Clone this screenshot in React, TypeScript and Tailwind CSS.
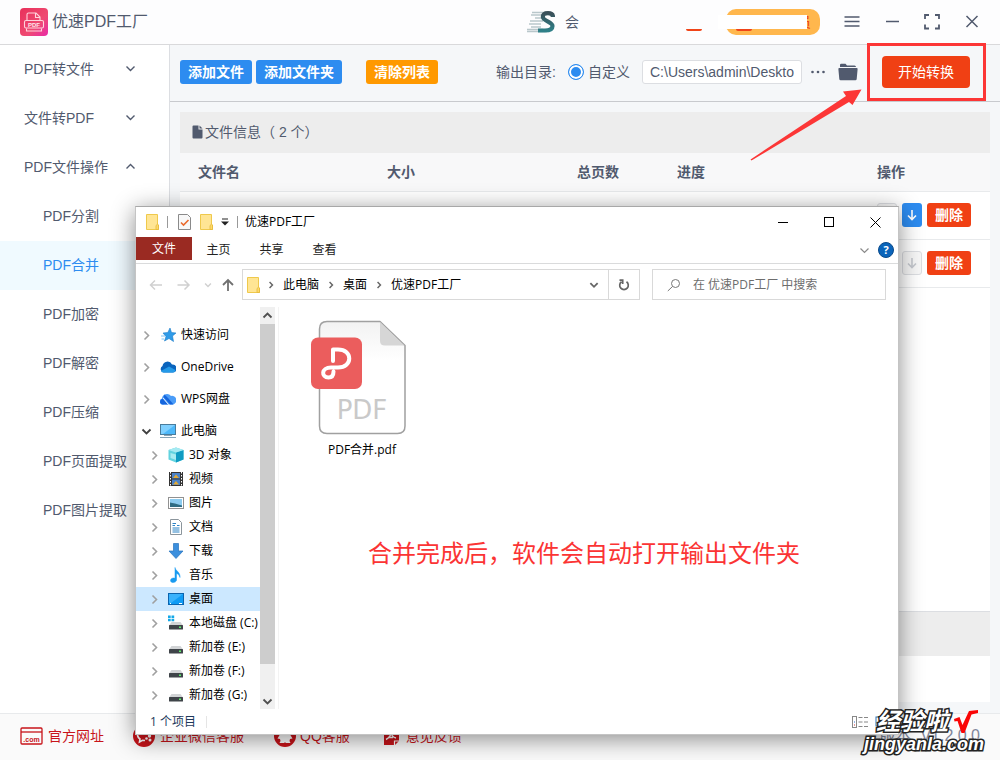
import React from 'react';

const uiFont = "font-['Liberation_Sans','Noto_Sans_CJK_SC',sans-serif]";
const winFont = "font-['Open_Sans','Noto_Sans_CJK_SC',sans-serif]";

function Chevron({ dir = 'right', className = '' }: { dir?: 'right' | 'down' | 'up'; className?: string }) {
  const paths = { right: 'M3.5 1.5 L7.5 5.5 L3.5 9.5', down: 'M1.5 3.5 L5.5 7.5 L9.5 3.5', up: 'M1.5 7.5 L5.5 3.5 L9.5 7.5' };
  return (
    <svg viewBox="0 0 11 11" fill="none" stroke="currentColor" className={`shrink-0 ${className}`}>
      <path d={paths[dir]} />
    </svg>
  );
}

function FolderIcon() {
  return (
    <svg viewBox="0 0 13 16" className="h-4 w-[13px] shrink-0">
      <path d="M0.5 0.5H11.5V10.5L12.5 11V15.5H0.5Z" fill="#ffe594" stroke="#efc94c" />
      <path d="M10 15.5V11.5L11.5 10.2L12.5 11V15.5Z" fill="#ffd968" stroke="#e3b93c" strokeWidth=".8" />
    </svg>
  );
}

function AppLogo() {
  return (
    <svg viewBox="0 0 28 28" className="h-7 w-7">
      <defs>
        <linearGradient id="logoBg" x1="0" y1="0" x2="1" y2="1">
          <stop offset="0" stopColor="#e8305a" />
          <stop offset=".6" stopColor="#ef4a72" />
          <stop offset="1" stopColor="#e82aa8" />
        </linearGradient>
      </defs>
      <rect width="28" height="28" rx="4" fill="url(#logoBg)" />
      <g fill="none" stroke="#ffd3dc" strokeWidth="1.1">
        <path d="M7 12V6.5Q7 5 8.500 5H16L20 9V12" />
        <path d="M15.500 5V9.500H20" />
        <rect x="4.500" y="12.500" width="19" height="7.500" rx="1.500" />
        <path d="M6.500 20.500V23H21.500V20.500" />
      </g>
      <text x="14" y="18.500" textAnchor="middle" fontSize="6" fontWeight="700" fill="#ffe6ec">PDF</text>
    </svg>
  );
}

function BrandS() {
  return (
    <svg viewBox="0 0 28 22" className="h-[22px] w-7">
      <defs>
        <linearGradient id="sFill" x1="0" y1="0" x2="0" y2="1">
          <stop offset="0" stopColor="#3a5059" />
          <stop offset="1" stopColor="#2f8088" />
        </linearGradient>
      </defs>
      <path d="M5 1.500H20M4 4H15M8 7H15M3 10H16M2 13H14M4 16H14M0 18.500H16M0 20.500H20" stroke="#b9c7cb" strokeWidth="1.300" fill="none" />
      <path d="M26 6C26 3 24 2.200 21 2.200C17.500 2.200 15.500 3.500 16 6.500C16.500 10 25.500 11 25.500 15C25.500 18.500 22 19.500 18 19.500H11" fill="none" stroke="url(#sFill)" strokeWidth="4.200" />
    </svg>
  );
}

const menuGroups = [
  { label: 'PDF转文件', open: false },
  { label: '文件转PDF', open: false },
  { label: 'PDF文件操作', open: true },
];
const subItems = ['PDF分割', 'PDF合并', 'PDF加密', 'PDF解密', 'PDF压缩', 'PDF页面提取', 'PDF图片提取'];

function Header() {
  return (
    <header className="flex h-[45px] shrink-0 items-center border-b border-[#d9d9db] bg-[#fdfdfe] px-5">
      <AppLogo />
      <h1 className="ml-1 text-[16px] leading-6">优速PDF工厂</h1>
      <div className="ml-auto flex items-center gap-6">
        <div className="relative flex w-[175px] items-center gap-[10px]">
          <BrandS />
          <span className="text-[14px] leading-5">会</span>
          <span className="absolute right-0 bottom-[2px] h-[2px] w-4 rounded-b-full bg-[#f04418]" />
        </div>
        <button className="relative flex h-[26px] w-[94px] items-center justify-end rounded-[10px] bg-[#ffb74d] pr-[9px] text-[14px] text-[#f04418]">
          员
          <span className="absolute top-[6px] -left-2 h-[14px] w-[89px] bg-white" />
          <span className="absolute top-5 left-[10px] h-[2px] w-4 rounded-b-full bg-[#f04418]" />
        </button>
        <button aria-label="menu">
          <svg viewBox="0 0 16 16" className="h-4 w-4"><path d="M.5 3H15.500M.5 7.500H15.500M.5 12H15.500" stroke="#515a6e" strokeWidth="1.500" /></svg>
        </button>
        <button aria-label="minimize">
          <svg viewBox="0 0 16 16" className="h-4 w-4"><path d="M2 7.500H15" stroke="#515a6e" strokeWidth="1.500" /></svg>
        </button>
        <button aria-label="fullscreen">
          <svg viewBox="0 0 16 16" className="h-4 w-4"><path d="M1 5V1H5M11 1H15V5M15 10.500V14.500H11M5 14.500H1V10.500" fill="none" stroke="#515a6e" strokeWidth="1.800" /></svg>
        </button>
        <button aria-label="close">
          <svg viewBox="0 0 16 16" className="h-4 w-4"><path d="M2.500 2L13.500 13M13.500 2L2.500 13" stroke="#515a6e" strokeWidth="1.500" /></svg>
        </button>
      </div>
    </header>
  );
}

function Sidebar() {
  return (
    <nav className="w-[170px] shrink-0 border-r border-[#dcdee2] bg-white text-[14px] leading-5">
      {menuGroups.map((g) => (
        <button key={g.label} className="flex h-[49px] w-full items-center justify-between pr-[33px] pb-[2px] pl-6">
          {g.label}
          <Chevron dir={g.open ? 'up' : 'down'} className="h-[11px] w-[11px] stroke-[1.4px]" />
        </button>
      ))}
      {subItems.map((s) => (
        <a key={s} href="#" className={`flex h-[49px] items-center pb-[2px] pl-[43px] ${s === 'PDF合并' ? 'bg-[#f0faff] text-[#2d8cf0]' : ''}`}>
          {s}
        </a>
      ))}
    </nav>
  );
}

function Toolbar() {
  return (
    <div className="flex h-[57px] shrink-0 items-center border-b border-[#c8cace] pr-[30px] pb-[2px] pl-[10px] text-[14px] leading-5">
      <button className="h-6 w-[72px] rounded-[3px] bg-[#2d8cf0] font-bold text-white">添加文件</button>
      <button className="ml-1 h-6 w-[86px] rounded-[3px] bg-[#2d8cf0] font-bold text-white">添加文件夹</button>
      <button className="ml-6 h-6 w-[72px] rounded-[3px] bg-[#ff9900] font-bold text-white">清除列表</button>
      <div className="ml-auto flex items-center">
        <span>输出目录:</span>
        <label className="ml-3 flex items-center gap-1">
          <input type="radio" name="out" defaultChecked className="h-4 w-4 appearance-none rounded-full border border-[#2d8cf0] bg-[#2d8cf0] [box-shadow:inset_0_0_0_2px_white]" />
          自定义
        </label>
        <input aria-label="输出目录" defaultValue="C:\Users\admin\Deskto" className="ml-3 h-6 w-40 rounded-[3px] border border-[#dcdee2] bg-white px-[7px] text-[14px]" />
        <button aria-label="more" className="ml-2">
          <svg viewBox="0 0 16 16" className="h-4 w-4" fill="#515a6e"><circle cx="2.500" cy="8" r="1.300" /><circle cx="8" cy="8" r="1.300" /><circle cx="13.500" cy="8" r="1.300" /></svg>
        </button>
        <button aria-label="open folder" className="ml-3">
          <svg viewBox="0 0 20 18" className="h-[18px] w-5" fill="#515a6e">
            <path d="M2 4V2Q2 .8 3.200 .8H7.500L9 2.500H16.500Q18 2.500 18 4Z" />
            <path d="M1.300 5H18.700Q19.800 5 19.600 6.200L18.700 16Q18.600 17.200 17.400 17.200H2.600Q1.400 17.200 1.300 16L.4 6.200Q.2 5 1.300 5Z" />
          </svg>
        </button>
        <div className="relative ml-6">
          <button className="h-8 w-[88px] rounded-[4px] bg-[#f04014] text-white">开始转换</button>
          <span className="pointer-events-none absolute -top-[13px] -left-[15px] h-[58px] w-[119px] border-[3px] border-[#fc3636]" />
          <svg viewBox="0 0 112 72" className="pointer-events-none absolute top-[33px] -left-[132px] h-[72px] w-28">
            <path d="M.5 70.500L96 7L93 2.500L111.500 .5L102.500 16L99 13L1.500 71.500Z" fill="#fc3636" />
          </svg>
        </div>
      </div>
    </div>
  );
}

function RowActions({ canMoveDown }: { canMoveDown: boolean }) {
  const disabled = 'border border-[#dcdee2] bg-[#f7f7f7] text-[#c5c8ce]';
  return (
    <div className="flex gap-[5px]">
      <button aria-label="up" className={`flex h-6 w-5 items-center justify-center rounded-[3px] ${disabled}`}>
        <svg viewBox="0 0 12 12" className="h-3 w-3 shrink-0" fill="none" stroke="currentColor" strokeWidth="1.600"><path d="M6 11V1.500M2 5.500L6 1.500L10 5.500" /></svg>
      </button>
      <button aria-label="down" className={`flex h-6 w-5 items-center justify-center rounded-[3px] ${canMoveDown ? 'bg-[#2d8cf0] text-white' : disabled}`}>
        <svg viewBox="0 0 12 12" className="h-3 w-3 shrink-0" fill="none" stroke="currentColor" strokeWidth="1.600"><path d="M6 1V10.500M2 6.500L6 10.500L10 6.500" /></svg>
      </button>
      <button className="h-6 w-11 rounded-[3px] bg-[#f04014] font-bold text-white">删除</button>
    </div>
  );
}

function FilePanel() {
  return (
    <section className="mx-[10px] mt-[10px] mb-[11px] flex flex-1 flex-col bg-white text-[14px] leading-5">
      <div className="flex h-[41px] items-center bg-[#ededed] pb-[2px] pl-3">
        <svg viewBox="0 0 11 14" className="h-[14px] w-[11px]">
          <path d="M1.500 .5H6.500V4.500H10.500V12.500Q10.500 13.500 9.500 13.500H1.500Q.5 13.500 .5 12.500V1.500Q.5 .5 1.500 .5Z" fill="#515a6e" />
          <path d="M7.500 .5L10.500 3.500H7.500Z" fill="#515a6e" />
        </svg>
        <span className="ml-[2px]">文件信息（ 2 个）</span>
      </div>
      <table className="w-full table-fixed border-collapse text-left">
        <colgroup>
          <col className="w-[189px]" />
          <col className="w-[190px]" />
          <col className="w-[100px]" />
          <col className="w-[200px]" />
          <col />
        </colgroup>
        <thead>
          <tr className="h-[38px] border-b border-[#e8eaec] bg-[#f8f8f9]">
            {['文件名', '大小', '总页数', '进度', '操作'].map((h) => (
              <th key={h} className="pl-[18px] font-bold">{h}</th>
            ))}
          </tr>
        </thead>
        <tbody>
          {[true, false].map((down, i) => (
            <tr key={i} className="h-12 border-b border-[#e8eaec]">
              <td /><td /><td /><td />
              <td className="pl-[18px]"><RowActions canMoveDown={down} /></td>
            </tr>
          ))}
        </tbody>
      </table>
      <div className="mt-auto mb-[46px] h-[45px] border-t border-[#dcdee2] bg-[#ededed]" />
    </section>
  );
}

function Footer() {
  const items = [
    {
      label: '官方网址',
      icon: (
        <svg viewBox="0 0 24 24" className="h-6 w-6">
          <rect x="1" y="4" width="21" height="16" rx="1" fill="none" stroke="#c8141a" strokeWidth="1.300" />
          <path d="M1 8H22" stroke="#c8141a" strokeWidth="1.300" />
          <text x="11.500" y="17.500" textAnchor="middle" fontSize="7" fontWeight="700" fill="#c8141a">.com</text>
        </svg>
      ),
    },
    {
      label: '企业微信客服',
      icon: (
        <svg viewBox="0 0 24 24" className="h-6 w-6">
          <circle cx="12" cy="12" r="11" fill="#c8141a" />
          <path d="M5.500 9Q6 5.500 11 5.500Q16.500 5.500 17 9M5.500 9Q5 13 8 15L7.500 18L10.500 16.300L13 16.500" fill="none" stroke="#fff" strokeWidth="1.600" />
          <circle cx="17.500" cy="12" r="1.700" fill="#fff" /><circle cx="14.500" cy="14.500" r="1.300" fill="#fff" /><circle cx="18" cy="16" r="1.500" fill="#fff" />
        </svg>
      ),
    },
    {
      label: 'QQ客服',
      icon: (
        <svg viewBox="0 0 24 24" className="h-6 w-6">
          <circle cx="13" cy="12" r="11" fill="#c8141a" />
          <path d="M13 4.500C9 4.500 8 7 8.200 10L5.500 14.500L8 15L8.500 17L7.500 19H12L13 18.300L14 19H18.500L17.500 17L18 15L20.500 14.500L17.800 10C18 7 17 4.500 13 4.500Z" fill="#fff" />
        </svg>
      ),
    },
    {
      label: '意见反馈',
      icon: (
        <svg viewBox="0 0 24 24" className="h-6 w-6">
          <path d="M6 4H18V8H21V17L17 21H6Z" fill="#c8141a" />
          <path d="M16.500 21V17H21" fill="none" stroke="#fff" strokeWidth="1.200" />
          <path d="M8 15.500Q13 13 13 8Q13.500 13 18 14M10 13.500H15" fill="none" stroke="#fff" strokeWidth="1.400" />
        </svg>
      ),
    },
  ];
  return (
    <footer className="flex h-[47px] shrink-0 items-center gap-7 border-t border-[#e8eaec] bg-[#fafafa] px-5 pb-[2px] text-[14px] leading-5 text-[#c8141a]">
      {items.map((it) => (
        <a key={it.label} href="#" className="flex items-center gap-1">{it.icon}{it.label}</a>
      ))}
      <span className="ml-auto text-[16px] text-[#80869c]">版本&nbsp; V1.2.0.0</span>
    </footer>
  );
}

const diskArt = (
  <>
    <path d="M3.500 7H12.500L15 10.500H1Z" fill="#d2d4d6" />
    <rect x="1" y="10" width="14" height="4.500" rx=".5" fill="#3f4449" />
    <rect x="11" y="11.500" width="2" height="1.500" fill="#5df06b" />
  </>
);

function TreeIcon({ kind }: { kind: string }) {
  const art: Record<string, React.ReactNode> = {
    star: <><path d="M10 1L11.500 5.500L16 6L12.500 9L13.500 14.500L9 11.500L4.500 14L6 9.500L3 6L7.800 5.500Z" fill="#2f9be8" stroke="#1c7cc7" strokeWidth=".6" /><path d="M1 9H5M1.500 12H4" stroke="#7fc4f5" /></>,
    cloud: <><path d="M3.500 13.500A3.500 3.500 0 0 1 2.500 7A5 5 0 0 1 12 5.500A4 4 0 0 1 13 13.500Z" fill="#0a64bd" /><path d="M1 12L9 7.500L15.500 11Q15 13.500 13 13.500H3.500Q1.500 13.500 1 12Z" fill="#259ae8" /></>,
    wps: <><path d="M4 13.500A3 3 0 0 1 2 7.500A5 5 0 0 1 11 5A4.200 4.200 0 0 1 13 13.500Z" fill="#4a9cf8" /><path d="M0 10.500Q.5 8 3 7.500L8 13.500H3Q0 13.500 0 10.500Z" fill="#1565dd" /><path d="M4.500 3.500L8.500 7.500L13.500 13.500H10L3.500 6Z" fill="#1565dd" /><path d="M3 7L8.500 13.500" stroke="#fff" strokeWidth=".9" /></>,
    pc: <><rect x=".5" y="1.500" width="15" height="10" fill="#4db8fa" stroke="#4a7c9c" /><path d="M1 2H15L3 11H1Z" fill="#80d0ff" /><path d="M4 12.500H12M0 14.500H16" stroke="#88a5b8" /></>,
    cube: <><path d="M8 .5L15.500 3V12.500L8 15.500L.5 12.500V3Z" fill="#62d3df" /><path d="M8 5.500L15.500 3V12.500L8 15.500Z" fill="#0f9bc2" /><path d="M.5 3L8 .5L15.500 3L8 5.500Z" fill="#a5eaf2" /><path d="M2.500 6L8 7.500V13L2.500 11Z" fill="#a8ecf1" /></>,
    film: <><rect x="1" y="1" width="14" height="14" fill="#333" /><path d="M2.500 1V15M13.500 1V15" stroke="#fff" strokeDasharray="1.500 1.500" /><rect x="4" y="2" width="8" height="5.500" fill="#4b82c8" /><rect x="4" y="8.500" width="8" height="5.500" fill="#4b82c8" /><path d="M5 7L8 3.500L11 7M5 13.500L8 10L11 13.500" fill="#e4aa33" /></>,
    image: <><rect x=".5" y="2.500" width="15" height="11" fill="#fff" stroke="#919191" /><rect x="2" y="4" width="12" height="8" fill="#8ccbef" /><path d="M2 7.500Q6 8 14 10.500V12H2Z" fill="#2f6c83" /></>,
    doc: <><path d="M2.500 .5H10.500L13.500 3.500V15.500H2.500Z" fill="#fff" stroke="#8b959c" /><path d="M4.500 4.500H8M9 6.500H11.500M4.500 6.500H7M4.500 9H11.500M4.500 11H11.500M4.500 13H11.500" stroke="#2b83c6" /></>,
    down: <path d="M5.500 .5H10.500V8H15L8 15.500L1 8H5.500Z" fill="#3c8fdd" stroke="#2773bd" strokeWidth=".7" />,
    music: <path d="M7 .5C7.500 4 12.500 5 12 10.500C11.500 8 10 7 8.500 6.500V13C8.500 16 2.500 16.500 2.500 13.500C2.500 11.500 5 10.500 7 11.300Z" fill="#179af0" stroke="#179af0" strokeWidth=".5" />,
    desktop: <><rect x=".5" y="2.500" width="15" height="11" fill="#0f9bf5" stroke="#0c64ae" /><path d="M1 3H15L3 12H1Z" fill="#39b2fc" /><path d="M2 12.500H3M11 12.500H14" stroke="#fff" /></>,
    system: <>{diskArt}<path d="M0 .5H2.700V3H0ZM3.500 .5H6.200V3H3.500ZM0 3.800H2.700V6.300H0ZM3.500 3.800H6.200V6.300H3.500Z" fill="#13a8e8" /></>,
    disk: diskArt,
  };
  return <svg viewBox="0 0 16 16" className="h-4 w-4 shrink-0">{art[kind]}</svg>;
}

const topNodes = [['star', '快速访问'], ['cloud', 'OneDrive'], ['wps', 'WPS网盘']];
const pcNodes = [
  ['cube', '3D 对象'], ['film', '视频'], ['image', '图片'], ['doc', '文档'], ['down', '下载'], ['music', '音乐'],
  ['desktop', '桌面'], ['system', '本地磁盘 (C:)'], ['disk', '新加卷 (E:)'], ['disk', '新加卷 (F:)'], ['disk', '新加卷 (G:)'],
];

function Tree() {
  return (
    <ul className="w-[124px] shrink-0 overflow-hidden pt-3 pb-[2px] whitespace-nowrap">
      {topNodes.map(([k, t]) => (
        <li key={t} className="flex h-8 items-center pl-[5px]">
          <Chevron className="h-[11px] w-[11px] stroke-[1.6px] text-[#a0a0a0]" />
          <span className="ml-2 flex items-center gap-[5px]"><TreeIcon kind={k} />{t}</span>
        </li>
      ))}
      <li className="mt-1 flex h-6 items-center pl-[5px]">
        <Chevron dir="down" className="h-[11px] w-[11px] stroke-[1.8px] text-[#404040]" />
        <span className="ml-2 flex items-center gap-[5px]"><TreeIcon kind="pc" />此电脑</span>
      </li>
      {pcNodes.map(([k, t]) => (
        <li key={t} className={`flex h-6 items-center pl-[13px] ${t === '桌面' ? 'bg-[#cce8ff]' : ''}`}>
          <Chevron className="h-[11px] w-[11px] stroke-[1.6px] text-[#a0a0a0]" />
          <span className="ml-2 flex items-center gap-[5px]"><TreeIcon kind={k} />{t}</span>
        </li>
      ))}
    </ul>
  );
}

function PdfFile() {
  return (
    <figure className="flex w-[110px] flex-col items-center">
      <svg viewBox="0 0 104 120" className="h-[120px] w-[104px]">
        <defs>
          <linearGradient id="paper" x1="0" y1="0" x2="0" y2="1">
            <stop offset="0" stopColor="#f2f2f2" />
            <stop offset=".35" stopColor="#ffffff" />
          </linearGradient>
        </defs>
        <path d="M17 4.500H70L95 28.500V109Q95 116.500 87.500 116.500H17Q9.500 116.500 9.500 109V12Q9.500 4.500 17 4.500Z" fill="url(#paper)" stroke="#a0a0a0" strokeWidth="1.500" strokeLinejoin="round" />
        <path d="M70 5L94.500 28.500H75Q70 28.500 70 24Z" fill="#d6d6d6" />
        <rect x="1" y="20.500" width="51" height="51.500" rx="7" fill="#eb5d5d" />
        <path d="M23 44V32.500H28C43 32.500 43 50.500 28 50.500H21C11 50.500 11 60.500 18.500 60.500C22.500 60.500 23.500 58 23.500 54.500" fill="none" stroke="#fff" strokeWidth="4" strokeLinecap="round" strokeLinejoin="round" />
        <text x="52" y="102" textAnchor="middle" fontSize="26" fill="#c9c9c9" style={{ fontFamily: '"DejaVu Sans", sans-serif' }}>PDF</text>
      </svg>
      <figcaption className="mt-[5px]">PDF合并.pdf</figcaption>
    </figure>
  );
}

function ExplorerWindow() {
  return (
    <div className={`absolute top-[206px] right-[101px] left-[135px] flex flex-col border border-[#c4c4c4] border-t-[#a8a8a8] bg-white text-[12px] leading-4 text-black shadow-[0_4px_22px_rgba(0,0,0,0.45)] ${winFont}`}>
      <div className="flex h-[30px] items-center pl-[10px]">
        <FolderIcon />
        <span className="ml-2 h-3 w-px bg-[#999]" />
        <svg viewBox="0 0 13 16" className="ml-[10px] h-4 w-[13px]">
          <path d="M.5 .5H9.500L12.500 3.500V15.500H.5Z" fill="#f8f8f8" stroke="#8a8a8a" />
          <path d="M3 8.500L5.500 11L10.500 6" fill="none" stroke="#ea6a2c" strokeWidth="1.600" />
        </svg>
        <span className="ml-[9px] flex"><FolderIcon /></span>
        <svg viewBox="0 0 8 8" className="ml-2 h-2 w-2"><path d="M1 1H7" stroke="#222" /><path d="M0 3.500H8L4 7.500Z" fill="#222" /></svg>
        <span className="ml-2 h-3 w-px bg-[#999]" />
        <span className="ml-[7px]">优速PDF工厂</span>
        <div className="ml-auto flex">
          <button aria-label="minimize" className="flex h-[29px] w-[46px] items-center justify-center"><svg viewBox="0 0 11 11" className="h-[11px] w-[11px]"><path d="M0 5.500H10" stroke="#000" /></svg></button>
          <button aria-label="maximize" className="flex h-[29px] w-[46px] items-center justify-center"><svg viewBox="0 0 11 11" className="h-[11px] w-[11px]"><rect x=".5" y=".5" width="9" height="9" fill="none" stroke="#000" /></svg></button>
          <button aria-label="close" className="flex h-[29px] w-[46px] items-center justify-center"><svg viewBox="0 0 11 11" className="h-[11px] w-[11px]"><path d="M.5 .5L10.500 10.500M10.500 .5L.5 10.500" stroke="#000" /></svg></button>
        </div>
      </div>
      <div className="flex h-[27px] items-start border-b border-[#dadbdc] text-[#222]">
        <button className="h-[23px] w-14 bg-[#9a2a22] text-white">文件</button>
        {['主页', '共享', '查看'].map((t) => (
          <button key={t} className="h-[26px] w-[53px]">{t}</button>
        ))}
        <div className="ml-auto flex h-[26px] items-center gap-2 pr-1">
          <Chevron dir="down" className="h-[11px] w-[11px] stroke-[1.2px] text-[#8a8a8a]" />
          <svg viewBox="0 0 16 16" className="h-4 w-4"><circle cx="8" cy="8" r="7.500" fill="#0a64ba" stroke="#0a4a8a" /><text x="8" y="12" textAnchor="middle" fontSize="11" fontWeight="700" fill="#fff">?</text></svg>
        </div>
      </div>
      <div className="mt-[5px] flex h-[31px] items-center pr-3 pl-3 text-[#d0d0d0]">
        <div className="flex items-center gap-3">
          <svg viewBox="0 0 16 16" className="h-4 w-4" fill="none" stroke="currentColor" strokeWidth="1.500"><path d="M14 8H2.500M7 3.500L2.500 8L7 12.500" /></svg>
          <svg viewBox="0 0 16 16" className="h-4 w-4" fill="none" stroke="currentColor" strokeWidth="1.500"><path d="M1.500 8H13M8.500 3.500L13 8L8.500 12.500" /></svg>
          <Chevron dir="down" className="h-2 w-2 stroke-[2px]" />
        </div>
        <svg viewBox="0 0 16 16" className="ml-2 h-4 w-4 text-[#707070]" fill="none" stroke="currentColor" strokeWidth="1.800"><path d="M8 14V3M3 8L8 3L13 8" /></svg>
        <div className="ml-[6px] flex h-[31px] flex-1 items-center border border-[#d9d9d9] text-black">
          <span className="ml-1 flex"><FolderIcon /></span>
          <Chevron className="ml-[7px] h-2 w-2 stroke-[2px] text-[#666]" />
          <span className="ml-2">此电脑</span>
          <Chevron className="ml-2 h-2 w-2 stroke-[2px] text-[#666]" />
          <span className="ml-2">桌面</span>
          <Chevron className="ml-2 h-2 w-2 stroke-[2px] text-[#666]" />
          <span className="ml-2">优速PDF工厂</span>
          <Chevron dir="down" className="mr-[9px] ml-auto h-[10px] w-[10px] stroke-[2px] text-[#666]" />
          <button aria-label="refresh" className="flex h-[29px] w-[31px] items-center justify-center border-l border-[#d9d9d9]">
            <svg viewBox="0 0 12 12" className="h-3 w-3" fill="none" stroke="#666" strokeWidth="1.700"><path d="M8.500 2.800A4.300 4.300 0 1 1 3.500 2.800M1.500 1.200H4.700V5" /></svg>
          </button>
        </div>
        <label className="ml-3 flex h-[31px] w-[234px] items-center border border-[#d9d9d9] pl-[14px]">
          <svg viewBox="0 0 14 14" className="h-[14px] w-[14px]" fill="none" stroke="#777"><circle cx="8.500" cy="5.500" r="4" /><path d="M5.500 8.500L.8 13" /></svg>
          <input aria-label="搜索" placeholder="在 优速PDF工厂 中搜索" className="ml-3 w-44 outline-none placeholder:text-[#6d6d6d]" />
        </label>
      </div>
      <div className="mt-[7px] flex">
        <Tree />
        <div className="flex w-[15px] shrink-0 flex-col items-center bg-[#f0f0f0] text-[#505050]">
          <Chevron dir="up" className="my-[3px] h-[11px] w-[11px] stroke-[1.8px]" />
          <div className="w-full flex-1 bg-[#cdcdcd]" />
          <Chevron dir="down" className="mt-8 mb-[2px] h-[11px] w-[11px] stroke-[1.8px]" />
        </div>
        <div className="ml-[3px] flex-1 border-l border-[#f3f3f3] pt-[10px] pl-7">
          <PdfFile />
          <p className="mt-[77px] ml-[61px] text-[24px] leading-9 whitespace-nowrap text-[#fb3434]">合并完成后，软件会自动打开输出文件夹</p>
        </div>
      </div>
      <div className="flex h-[25px] items-center pr-3 pl-[14px] text-[#1e395b]">
        <span>1 个项目</span>
        <span className="ml-[10px] h-3 w-px bg-[#e5e5e5]" />
        <svg viewBox="0 0 34 14" className="ml-auto h-[14px] w-[34px]" fill="none" stroke="#888">
          <rect x=".5" y="1.500" width="4" height="11" />
          <path d="M6.500 2.500H10.500M12 2.500H16M6.500 7H10.500M12 7H16M6.500 11.500H10.500M12 11.500H16" />
          <path d="M2 7H3" stroke="#2a6fd0" /><path d="M2 10H3" stroke="#d03030" />
          <rect x="24" y="2" width="9" height="9" stroke="#2a70b8" />
        </svg>
      </div>
    </div>
  );
}

function Watermark() {
  return (
    <div className="pointer-events-none absolute right-4 bottom-[6px] flex flex-col items-end font-['Liberation_Sans','Noto_Sans_CJK_SC',sans-serif] font-bold text-white italic [paint-order:stroke_fill] [-webkit-text-stroke:3px_#222]">
      <div className="flex items-center gap-[6px] pr-[6px]">
        <span className="text-[24px] leading-6">经验啦</span>
        <svg viewBox="0 0 24 24" className="h-6 w-6"><path d="M0 9L5.500 7L8.500 15L15 1L24 0V3L17.500 4.500L10.500 23H7.500L3.500 11L.5 11.500Z" fill="#fa0505" /></svg>
      </div>
      <span className="text-[18px] leading-5">jingyanla.com</span>
    </div>
  );
}

export default function App() {
  return (
    <div className={`relative flex min-h-screen flex-col overflow-hidden bg-[#f5f7f9] text-[#515a6e] ${uiFont}`}>
      <Header />
      <div className="flex flex-1">
        <Sidebar />
        <main className="flex min-w-0 flex-1 flex-col">
          <Toolbar />
          <FilePanel />
        </main>
      </div>
      <Footer />
      <ExplorerWindow />
      <Watermark />
    </div>
  );
}
